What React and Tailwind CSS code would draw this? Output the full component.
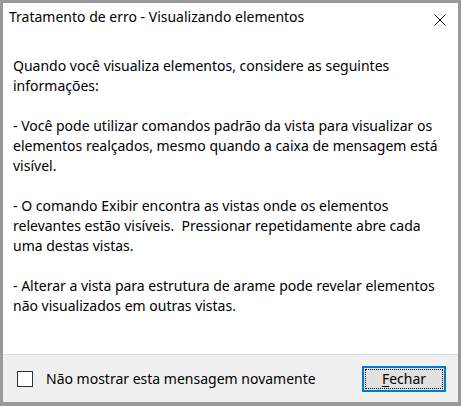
import React from 'react';

const CloseIcon = () => (
  <svg width="12" height="12" viewBox="0 0 12 12" className="block">
    <path d="M0.5 0.5 L11.5 11.5 M11.5 0.5 L0.5 11.5" stroke="#000" strokeWidth="1" fill="none" />
  </svg>
);

const paragraphs = [
  ['Quando você visualiza elementos, considere as seguintes', 'informações:'],
  [
    '- Você pode utilizar comandos padrão da vista para visualizar os',
    'elementos realçados, mesmo quando a caixa de mensagem está',
    'visível.',
  ],
  [
    '- O comando Exibir encontra as vistas onde os elementos',
    'relevantes estão visíveis.\u00a0 Pressionar repetidamente abre cada',
    'uma destas vistas.',
  ],
  [
    '- Alterar a vista para estrutura de arame pode revelar elementos',
    'não visualizados em outras vistas.',
  ],
];

export default function App() {
  return (
    <div
      className="w-[461px] h-[406px] bg-white border-[#999999] border-t-[3px] border-l-[3px] border-r-[3px] border-b-[4px] flex flex-col text-black text-[14px] leading-[20px]"
      style={{ fontFamily: '"Segoe UI", "Noto Sans", sans-serif' }}
    >
      <div className="flex items-start justify-between pl-[6px] pr-[12px] pt-[4px]">
        <span className="text-[14px] leading-[20px]">Tratamento de erro - Visualizando elementos</span>
        <div className="mt-[7px]">
          <CloseIcon />
        </div>
      </div>

      <div className="flex flex-col gap-[20px] pl-[10px] pt-[29px]">
        {paragraphs.map((lines, i) => (
          <p key={i}>
            {lines.map((l, j) => (
              <span key={j} className="block whitespace-nowrap">{l}</span>
            ))}
          </p>
        ))}
      </div>

      <div className="flex-1" />

      <div className="h-[48px] border-t border-[#dfdfdf] bg-[#f0f0f0] flex items-center justify-between pl-[14px] pr-[12px]">
        <label className="flex items-center gap-[13px]">
          <span className="w-[16px] h-[16px] border border-[#333333] bg-white block" />
          <span>Não mostrar esta mensagem novamente</span>
        </label>
        <button className="w-[84px] h-[26px] border-2 border-[#0078d7] bg-[#e1e1e1] p-[1px]">
          <span className="flex items-center justify-center w-full h-full border border-dotted border-black">
            <span><span className="underline underline-offset-2">F</span>echar</span>
          </span>
        </button>
      </div>
    </div>
  );
}
